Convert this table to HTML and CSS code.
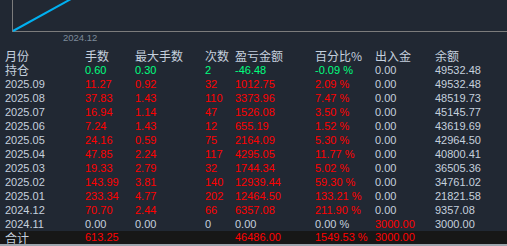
FILE: index.html
```html
<!DOCTYPE html>
<html lang="zh">
	<head>
		<meta charset="UTF-8" />
		<meta name="viewport" content="width=device-width, initial-scale=1.0" />
		<title>月度统计</title>
		<link rel="stylesheet" href="styles.css">
	</head>
	<body>
		<div class="chart">
			<svg width="507" height="49" viewBox="0 0 507 49">
				<line x1="12.5" y1="0" x2="12.5" y2="31.5" stroke="#7c7c7c" stroke-width="1" />
				<line x1="12" y1="31.5" x2="507" y2="31.5" stroke="#7c7c7c" stroke-width="1" />
				<line x1="13" y1="31" x2="71" y2="-1" stroke="#00b0f0" stroke-width="2" />
			</svg>
			<span class="axis-label">2024.12</span>
		</div>
		<div class="stats">
			<div class="row head">
				<span>月份</span><span>手数</span><span>最大手数</span><span>次数</span><span>盈亏金额</span><span>百分比%</span><span>出入金</span><span>余额</span>
			</div>
			<div class="row">
				<span class="cjk">持仓</span><span class="up">0.60</span><span class="up">0.30</span><span class="up">2</span><span class="up">-46.48</span><span class="up">-0.09 %</span><span>0.00</span><span>49532.48</span>
			</div>
			<div class="row">
				<span>2025.09</span><span class="red">11.27</span><span class="red">0.92</span><span class="red">32</span><span class="red">1012.75</span><span class="red">2.09 %</span><span>0.00</span><span>49532.48</span>
			</div>
			<div class="row">
				<span>2025.08</span><span class="red">37.83</span><span class="red">1.43</span><span class="red">110</span><span class="red">3373.96</span><span class="red">7.47 %</span><span>0.00</span><span>48519.73</span>
			</div>
			<div class="row">
				<span>2025.07</span><span class="red">16.94</span><span class="red">1.14</span><span class="red">47</span><span class="red">1526.08</span><span class="red">3.50 %</span><span>0.00</span><span>45145.77</span>
			</div>
			<div class="row">
				<span>2025.06</span><span class="red">7.24</span><span class="red">1.43</span><span class="red">12</span><span class="red">655.19</span><span class="red">1.52 %</span><span>0.00</span><span>43619.69</span>
			</div>
			<div class="row">
				<span>2025.05</span><span class="red">24.16</span><span class="red">0.59</span><span class="red">75</span><span class="red">2164.09</span><span class="red">5.30 %</span><span>0.00</span><span>42964.50</span>
			</div>
			<div class="row">
				<span>2025.04</span><span class="red">47.85</span><span class="red">2.24</span><span class="red">117</span><span class="red">4295.05</span><span class="red">11.77 %</span><span>0.00</span><span>40800.41</span>
			</div>
			<div class="row">
				<span>2025.03</span><span class="red">19.33</span><span class="red">2.79</span><span class="red">32</span><span class="red">1744.34</span><span class="red">5.02 %</span><span>0.00</span><span>36505.36</span>
			</div>
			<div class="row">
				<span>2025.02</span><span class="red">143.99</span><span class="red">3.81</span><span class="red">140</span><span class="red">12939.44</span><span class="red">59.30 %</span><span>0.00</span><span>34761.02</span>
			</div>
			<div class="row">
				<span>2025.01</span><span class="red">233.34</span><span class="red">4.77</span><span class="red">202</span><span class="red">12464.50</span><span class="red">133.21 %</span><span>0.00</span><span>21821.58</span>
			</div>
			<div class="row">
				<span>2024.12</span><span class="red">70.70</span><span class="red">2.44</span><span class="red">66</span><span class="red">6357.08</span><span class="red">211.90 %</span><span>0.00</span><span>9357.08</span>
			</div>
			<div class="row">
				<span>2024.11</span><span>0.00</span><span>0.00</span><span>0</span><span>0.00</span><span>0.00 %</span><span class="red">3000.00</span><span>3000.00</span>
			</div>
			<div class="row total">
				<span class="cjk">合计</span><span class="red">613.25</span><span></span><span></span><span class="red">46486.00</span><span class="red">1549.53 %</span><span class="red">3000.00</span><span></span>
			</div>
		</div>
	</body>
</html>
```

FILE: styles.css
```css
body {
	margin: 0;
	background-color: #212833;
	color: #c5d0de;
	font-family: "Liberation Sans", Arial, "Noto Sans CJK SC", sans-serif;
	font-size: 11px;
	overflow: hidden;
}
.chart {
	position: relative;
	height: 49px;
}
.chart svg {
	display: block;
}
.axis-label {
	position: absolute;
	left: 63px;
	top: 32px;
	font-size: 9.5px;
	color: #7d8a9a;
}
.stats {
	border-bottom: 2px solid #9ea6ae;
}
.row {
	display: grid;
	grid-template-columns: 80px 50px 70px 30px 80px 60px 60px 1fr;
	height: 14px;
	line-height: 14px;
	padding-left: 5px;
	white-space: nowrap;
}
.head,
.cjk {
	font-family: "Noto Sans CJK SC", sans-serif;
	font-size: 12px;
}
.red {
	color: #ff0000;
}
.up {
	color: #00ff7f;
}
.total {
	background-color: #171717;
	height: 13px;
	line-height: 13px;
}
```
